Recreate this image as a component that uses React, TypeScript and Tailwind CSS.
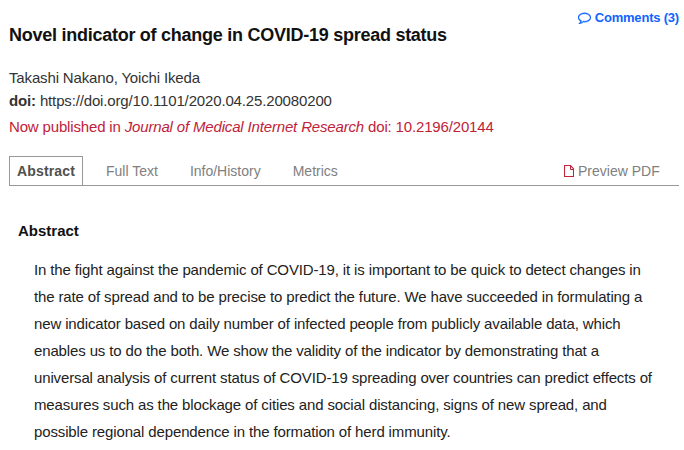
const tabs = ["Full Text", "Info/History", "Metrics"];

const lines = [
  "In the fight against the pandemic of COVID-19, it is important to be quick to detect changes in",
  "the rate of spread and to be precise to predict the future. We have succeeded in formulating a",
  "new indicator based on daily number of infected people from publicly available data, which",
  "enables us to do the both. We show the validity of the indicator by demonstrating that a",
  "universal analysis of current status of COVID-19 spreading over countries can predict effects of",
  "measures such as the blockage of cities and social distancing, signs of new spread, and",
  "possible regional dependence in the formation of herd immunity.",
];

function CommentIcon() {
  return (
    <svg viewBox="0 0 1792 1792" className="h-[13px] w-[13px]" fill="currentColor" stroke="currentColor" strokeWidth="60" aria-hidden="true">
      <path d="M896 384q-204 0-381.5 69.5t-282 187.5-104.5 255q0 112 71.5 213.5t201.5 175.5l87 50-27 96q-24 91-70 172 152-63 275-171l43-38 57 6q69 8 130 8 204 0 381.5-69.5t282-187.5 104.5-255-104.5-255-282-187.5-381.5-69.5zm896 512q0 174-120 321.5t-326 233-450 85.5q-70 0-145-8-198 175-460 242-49 14-114 22h-5q-15 0-27-10.5t-16-27.5v-1q-3-4-.5-12t2-10 4.5-9.5l6-9 7-8.5 8-9q7-8 31-34.5t34.5-38 31-39.5 32.5-51 27-59 26-76q-157-89-247.5-220t-90.5-281q0-174 120-321.5t326-233 450-85.5 450 85.5 326 233 120 321.5z" />
    </svg>
  );
}

function FileIcon() {
  return (
    <svg viewBox="0 0 10 12" className="h-3 w-2.5 text-[#c2223a]" fill="none" stroke="currentColor" aria-hidden="true">
      <path d="M.5.5h5.8l3.2 3.2v7.8h-9z" strokeWidth="1.1" strokeLinejoin="round" />
      <path d="M6.5 .5V4.5h3" />
    </svg>
  );
}

export default function App() {
  return (
    <main className="flex h-[450px] w-[684px] flex-col overflow-hidden whitespace-nowrap bg-white pl-[9px] pr-[5px] font-['Liberation_Sans',Arial,sans-serif] text-[15px] tracking-[-0.15px] text-[#333]">
      <a className="mt-2 flex h-[18px] items-center justify-end gap-[4px] text-[13px] font-bold tracking-[-0.2px] text-[#0f63ff]">
        <CommentIcon />
        <span className="pt-px">Comments (3)</span>
      </a>
      <h1 className="h-[41px] text-[18px] font-bold leading-[18px] tracking-[-0.26px] text-[#111]">Novel indicator of change in COVID-19 spread status</h1>
      <p className="h-[23px] leading-[22px]">Takashi Nakano, Yoichi Ikeda</p>
      <p className="h-[26px] leading-[22px]"><b>doi:</b> https://doi.org/10.1101/2020.04.25.20080200</p>
      <p className="h-10 leading-[22px] tracking-[-0.16px] text-[#bf2238]">Now published in <i>Journal of Medical Internet Research</i> doi: 10.2196/20144</p>
      <nav className="flex h-[30px] shrink-0 items-stretch border-b border-[#999] text-[14px] leading-[31px] tracking-normal text-[#808080]">
        <span className="w-[74px] border border-b-0 border-[#999] pl-[7px] font-bold leading-7 tracking-[0.15px] text-[#505050]">Abstract</span>
        <div className="ml-[23px] flex gap-8">
          {tabs.map((tab) => <span key={tab}>{tab}</span>)}
        </div>
        <a className="ml-auto mr-[19px] flex items-center gap-1">
          <FileIcon />
          <span className="w-[82px] self-start">Preview PDF</span>
        </a>
      </nav>
      <h2 className="ml-[9px] mt-[35px] h-[35px] font-bold leading-5 tracking-normal text-[#111]">Abstract</h2>
      <p className="ml-[25px] leading-[27px] tracking-[-0.135px] text-[#222]">
        {lines.map((line) => <span key={line} className="block">{line}</span>)}
      </p>
    </main>
  );
}
